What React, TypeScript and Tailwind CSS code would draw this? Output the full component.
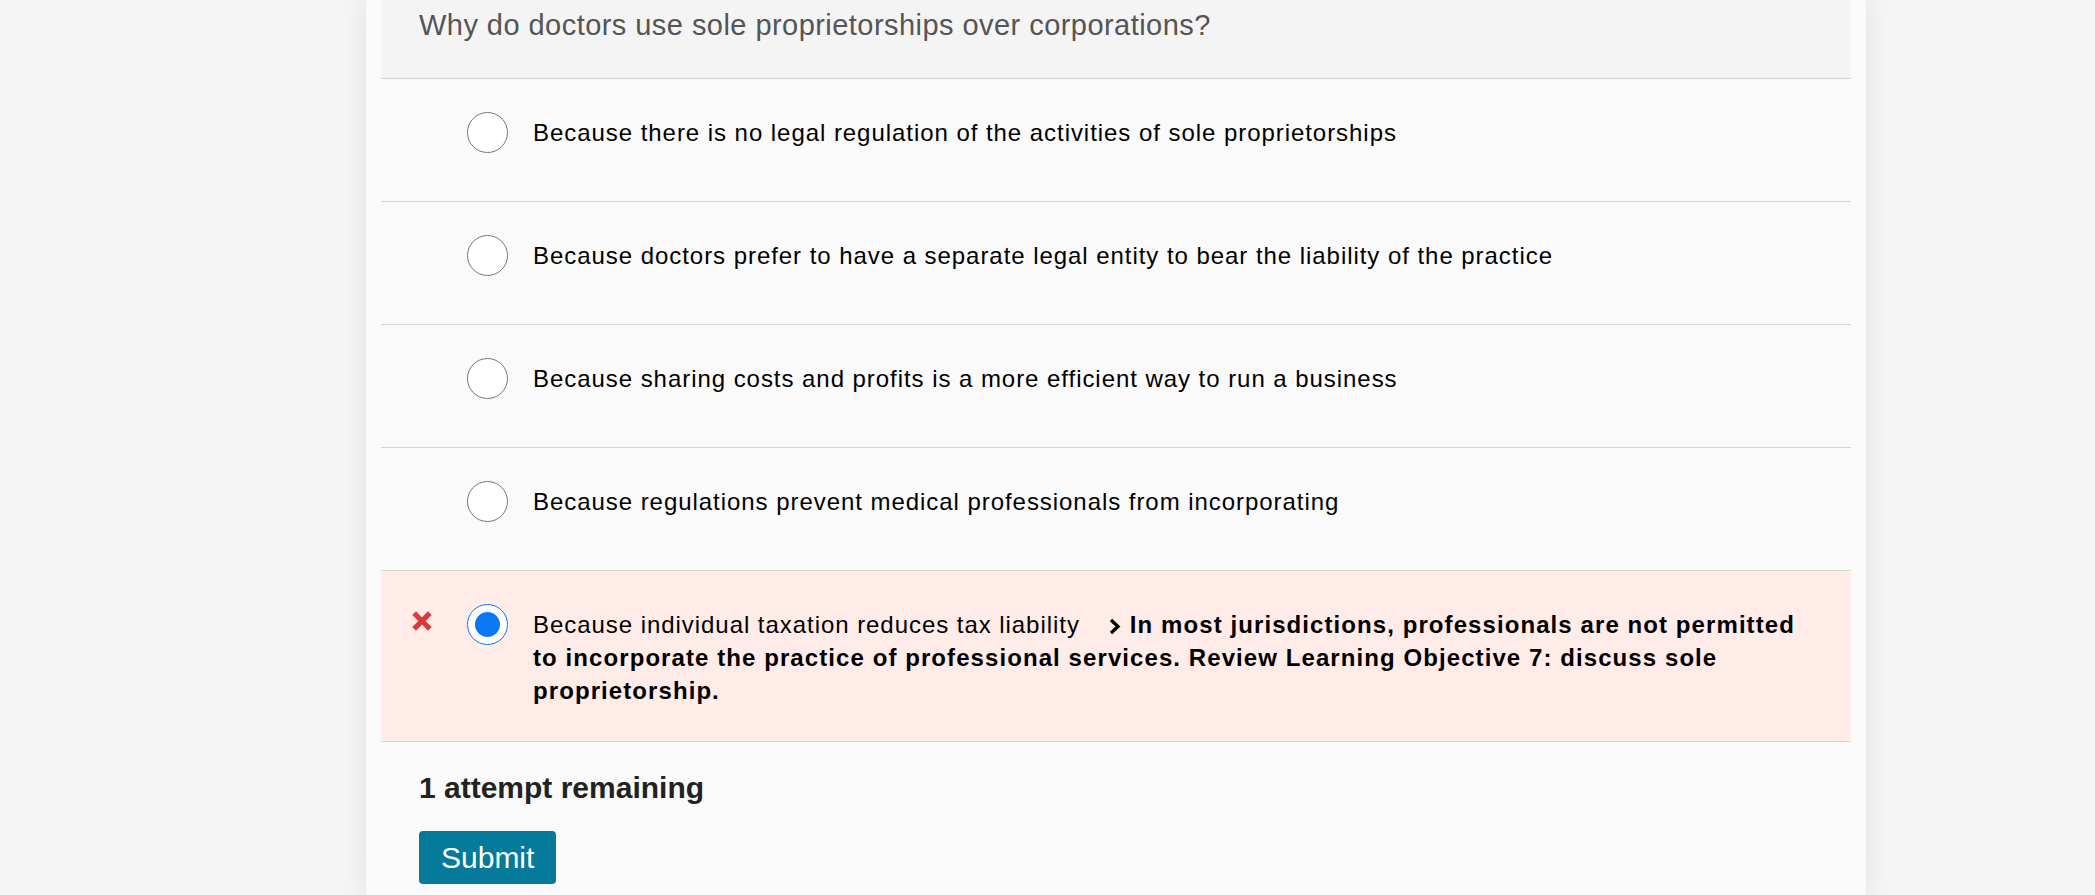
import React from 'react';

const options = [
  'Because there is no legal regulation of the activities of sole proprietorships',
  'Because doctors prefer to have a separate legal entity to bear the liability of the practice',
  'Because sharing costs and profits is a more efficient way to run a business',
  'Because regulations prevent medical professionals from incorporating',
];

const WrongMark = () => (
  <svg width="20" height="20" viewBox="0 0 20 20" className="block">
    <path d="M4 4 L16 16 M16 4 L4 16" stroke="#dc3a3a" strokeWidth="5.2" strokeLinecap="square" fill="none" />
  </svg>
);

const Radio = ({ checked }: { checked?: boolean }) =>
  checked ? (
    <div className="w-[41px] h-[41px] shrink-0 -mt-[4px] rounded-full border-[1.5px] border-[#0a77f5] bg-white flex items-center justify-center">
      <div className="w-[25px] h-[25px] rounded-full bg-[#0a77f5]" />
    </div>
  ) : (
    <div className="w-[41px] h-[41px] shrink-0 -mt-[4px] rounded-full border border-[#767676] bg-white" />
  );

const Chevron = () => (
  <svg width="13" height="17" viewBox="0 0 13 17" className="inline-block ml-[28px] mr-[9px]">
    <polyline points="3,2 10,8.5 3,15" stroke="#000" strokeWidth="3.3" fill="none" />
  </svg>
);

export default function App() {
  return (
    <div className="min-h-screen bg-[#f5f5f5] font-['Liberation_Sans',Arial,sans-serif]">
      <div className="ml-[366px] w-[1500px] h-[895px] overflow-hidden bg-[#fafafa] px-[15px] shadow-[0_0_28px_rgba(0,0,0,0.09)]">
        <div className="bg-[#f4f4f4] border-b border-[#d2d2d2] pl-[38px] pt-[5px] pb-[33px] text-[29px] leading-[40px] text-[#555555] tracking-[0.45px]">
          Why do doctors use sole proprietorships over corporations?
        </div>

        {options.map((o) => (
          <div key={o} className="flex border-b border-[#d6d6d6] pl-[31px] pr-[40px] pt-[37px] pb-[35px]">
            <div className="w-[20px] shrink-0" />
            <div className="ml-[35px]">
              <Radio />
            </div>
            <div className="ml-[25px] flex-1 min-h-[50px] text-[24px] leading-[33px] text-black tracking-[0.95px]">{o}</div>
          </div>
        ))}

        <div className="flex border-b border-[#d6d6d6] bg-[#ffece9] pl-[31px] pr-[40px] pt-[37px] pb-[34px]">
          <div className="w-[20px] shrink-0 pt-[3px]">
            <WrongMark />
          </div>
          <div className="ml-[35px]">
            <Radio checked />
          </div>
          <div className="ml-[25px] flex-1 min-h-[50px] text-[24px] leading-[33px] text-black tracking-[0.95px]">
            Because individual taxation reduces tax liability
            <Chevron />
            <span className="font-bold tracking-[1.08px]">
              In most jurisdictions, professionals are not permitted to incorporate the practice of professional services. Review Learning Objective 7: discuss sole proprietorship.
            </span>
          </div>
        </div>

        <div className="pl-[38px] pt-[28px]">
          <div className="text-[30px] leading-[36px] font-bold text-[#222222]">1 attempt remaining</div>
          <button className="mt-[25px] bg-[#057a9b] text-white text-[30px] leading-[33px] px-[22px] py-[10px] rounded-[4px]">
            Submit
          </button>
        </div>
      </div>
    </div>
  );
}
